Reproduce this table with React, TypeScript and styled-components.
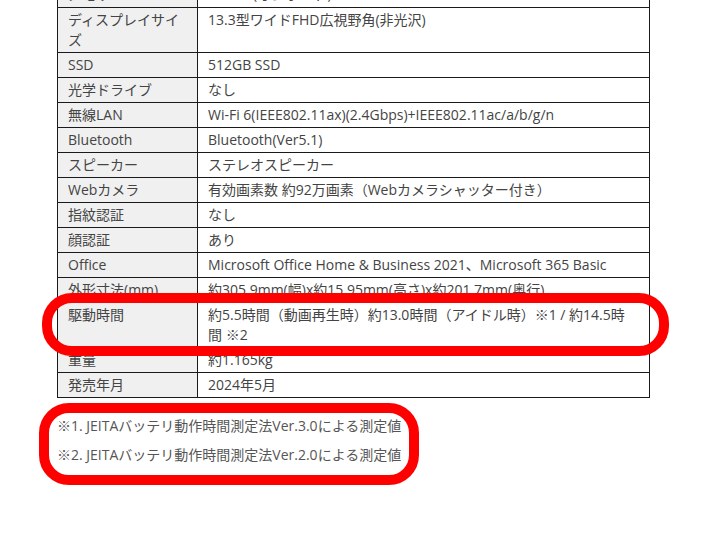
import React from "react";
import styled, { createGlobalStyle } from "styled-components";

const GlobalStyle = createGlobalStyle`
  html, body { margin: 0; padding: 0; background: #fff; }
  body { font-family: "Open Sans", "Noto Sans CJK JP", sans-serif; }
`;

const Page = styled.div`
  position: relative;
  width: 719px;
  height: 539px;
  overflow: hidden;
  padding-left: 57px;
  box-sizing: border-box;
`;

const SpecTable = styled.table`
  margin-top: -18px;
  width: 593px;
  border-collapse: collapse;
  font-size: 14px;
  line-height: 20px;
  color: #444;
`;

const HeadCell = styled.th`
  width: 119px;
  text-align: left;
  font-weight: normal;
  vertical-align: top;
  background: #f0f0f0;
  border: 1px solid #1a1a1a;
  padding: 2px 10px 2px 10px;
`;

const ValueCell = styled.td`
  vertical-align: top;
  border: 1px solid #1a1a1a;
  padding: 2px 16px 2px 10px;
  background: #fff;
`;

const Notes = styled.div`
  margin-top: 18px;
  display: flex;
  flex-direction: column;
  gap: 9px;
  font-size: 14px;
  line-height: 20px;
  color: #555;
`;

const Highlight = styled.div<{ $x: number; $y: number; $w: number; $h: number }>`
  position: absolute;
  left: ${(p) => p.$x}px;
  top: ${(p) => p.$y}px;
  width: ${(p) => p.$w}px;
  height: ${(p) => p.$h}px;
  box-sizing: border-box;
  border: 10px solid #ff0000;
  border-radius: 30px;
  pointer-events: none;
`;

const rows: [string, React.ReactNode][] = [
  ["メモリ", "16GB（オンボード）"],
  ["ディスプレイサイズ", "13.3型ワイドFHD広視野角(非光沢)"],
  ["SSD", "512GB SSD"],
  ["光学ドライブ", "なし"],
  ["無線LAN", "Wi-Fi 6(IEEE802.11ax)(2.4Gbps)+IEEE802.11ac/a/b/g/n"],
  ["Bluetooth", "Bluetooth(Ver5.1)"],
  ["スピーカー", "ステレオスピーカー"],
  ["Webカメラ", "有効画素数 約92万画素（Webカメラシャッター付き）"],
  ["指紋認証", "なし"],
  ["顔認証", "あり"],
  ["Office", "Microsoft Office Home & Business 2021、Microsoft 365 Basic"],
  ["外形寸法(mm)", "約305.9mm(幅)x約15.95mm(高さ)x約201.7mm(奥行)"],
  ["駆動時間", "約5.5時間（動画再生時）約13.0時間（アイドル時）※1 / 約14.5時間 ※2"],
  ["重量", "約1.165kg"],
  ["発売年月", "2024年5月"],
];

export default function App() {
  return (
    <>
      <GlobalStyle />
      <Page>
        <SpecTable>
          <tbody>
            {rows.map(([k, v]) => (
              <tr key={k}>
                <HeadCell>{k}</HeadCell>
                <ValueCell>{v}</ValueCell>
              </tr>
            ))}
          </tbody>
        </SpecTable>
        <Notes>
          <div>※1. JEITAバッテリ動作時間測定法Ver.3.0による測定値</div>
          <div>※2. JEITAバッテリ動作時間測定法Ver.2.0による測定値</div>
        </Notes>
        <Highlight $x={42} $y={293} $w={627} $h={63} />
        <Highlight $x={39} $y={403} $w={380} $h={82} />
      </Page>
    </>
  );
}
